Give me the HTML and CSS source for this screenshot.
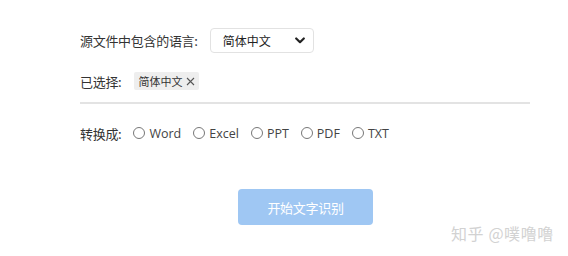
FILE: index.html
```html
<!DOCTYPE html>
<html lang="zh-CN">
<head>
<meta charset="utf-8">
<title>文字识别</title>
<link rel="stylesheet" href="styles.css">
</head>
<body>
<div class="page">
  <div class="row row-lang">
    <span class="label">源文件中包含的语言:</span>
    <div class="select">
      <span class="select-text">简体中文</span>
      <svg class="chevron" width="10" height="7" viewBox="0 0 10 7"><path d="M1.2 1.5 L5 5.2 L8.8 1.5" fill="none" stroke="#222" stroke-width="2.2" stroke-linecap="round" stroke-linejoin="round"/></svg>
    </div>
  </div>
  <div class="row row-sel">
    <span class="label">已选择:</span>
    <span class="tag">简体中文<svg class="tag-x" width="9" height="9" viewBox="0 0 9 9"><path d="M1 1 L8 8 M8 1 L1 8" stroke="#555" stroke-width="1.1" fill="none"/></svg></span>
  </div>
  <div class="divider"></div>
  <div class="row row-fmt">
    <span class="label">转换成:</span>
    <label class="radio"><span class="dot"></span>Word</label>
    <label class="radio"><span class="dot"></span>Excel</label>
    <label class="radio"><span class="dot"></span>PPT</label>
    <label class="radio"><span class="dot"></span>PDF</label>
    <label class="radio"><span class="dot"></span>TXT</label>
  </div>
  <div class="actions">
    <button class="btn">开始文字识别</button>
  </div>
  <div class="watermark">知乎 @噗噜噜</div>
</div>
</body>
</html>
```
FILE: styles.css
```css
html, body {
  margin: 0;
  padding: 0;
  background: #fff;
}
body {
  font-family: "Open Sans", "Noto Sans CJK SC", sans-serif;
  color: #333;
  width: 568px;
  height: 256px;
  overflow: hidden;
}
.page {
  position: relative;
  height: 256px;
  padding: 28px 0 0 80px;
  box-sizing: border-box;
}
.row {
  display: flex;
  align-items: center;
}
.label {
  font-family: "Noto Sans CJK SC", sans-serif;
  font-size: 13px;
  color: #333;
  letter-spacing: -0.3px;
}
.row-lang {
  height: 25px;
}
.select {
  margin-left: 12px;
  width: 104px;
  height: 25px;
  box-sizing: border-box;
  border: 1px solid #e2e2e2;
  border-radius: 4px;
  display: flex;
  align-items: center;
  justify-content: space-between;
  padding: 0 8px 0 12px;
}
.select-text {
  font-family: "Noto Sans CJK SC", sans-serif;
  font-size: 12px;
  color: #222;
}
.row-sel {
  margin-top: 19px;
  height: 18px;
}
.tag {
  margin-left: 13px;
  height: 18px;
  display: flex;
  align-items: center;
  gap: 4px;
  padding: 0 4px 0 4px;
  background: #eeeeee;
  border-radius: 2px;
  font-family: "Noto Sans CJK SC", sans-serif;
  font-size: 11px;
  color: #333;
}
.divider {
  margin-top: 12px;
  width: 450px;
  height: 2px;
  background: #e3e3e3;
}
.row-fmt {
  margin-top: 19px;
  height: 20px;
}
.row-fmt .label {
  margin-right: 12px;
}
.radio {
  display: flex;
  align-items: center;
  font-size: 12.5px;
  color: #444;
  margin-right: 12px;
}
.dot {
  width: 10px;
  height: 10px;
  border: 1px solid #777;
  border-radius: 50%;
  margin-right: 4px;
}
.actions {
  margin-top: 46px;
  padding-left: 158px;
}
.btn {
  width: 135px;
  height: 36px;
  border: none;
  border-radius: 4px;
  background: #9fc7f3;
  color: #fff;
  font-family: "Noto Sans CJK SC", sans-serif;
  font-size: 13px;
  letter-spacing: -0.3px;
}
.watermark {
  position: absolute;
  left: 451px;
  top: 221px;
  font-family: "Noto Sans CJK SC", sans-serif;
  font-size: 16px;
  letter-spacing: 0.6px;
  color: #d2d2d2;
}
```
